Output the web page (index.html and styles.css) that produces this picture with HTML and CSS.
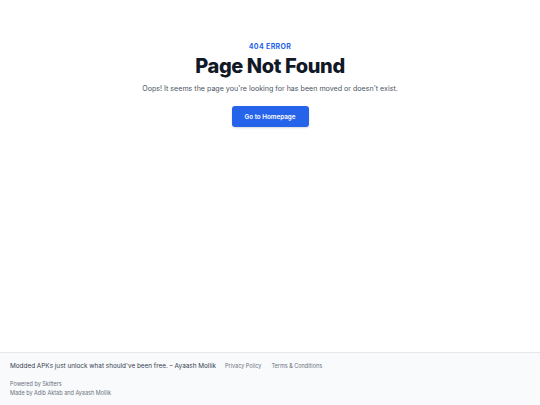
FILE: index.html
```html
<!DOCTYPE html>
<html lang="en">
<head>
<meta charset="utf-8">
<title>404 - Page Not Found</title>
<link rel="stylesheet" href="styles.css">
</head>
<body>
<div class="page">
  <main class="main">
    <p class="eyebrow">404 Error</p>
    <h1 class="title">Page Not Found</h1>
    <p class="desc">Oops! It seems the page you're looking for has been moved or doesn't exist.</p>
    <a class="btn" href="#">Go to Homepage</a>
  </main>
  <footer class="footer">
    <div class="footer-top">
      <span class="quote">Modded APKs just unlock what should've been free. – Ayaash Mollik</span>
      <nav class="links">
        <a href="#">Privacy Policy</a>
        <a href="#">Terms &amp; Conditions</a>
      </nav>
    </div>
    <div class="credits">
      <p>Powered by Skitters</p>
      <p>Made by Adib Aktab and Ayaash Mollik</p>
    </div>
  </footer>
</div>
</body>
</html>
```
FILE: styles.css
```css
* { box-sizing: border-box; }
html, body { margin: 0; padding: 0; }
body {
  font-family: Inter, Roboto, "Liberation Sans", sans-serif;
  background: #ffffff;
  color: #111827;
}
.page {
  min-height: 405px;
  display: flex;
  flex-direction: column;
}
.main {
  display: flex;
  flex-direction: column;
  align-items: center;
  text-align: center;
  padding-top: 42px;
}
.eyebrow {
  margin: 0;
  font-size: 7px;
  font-weight: 700;
  letter-spacing: 0.05em;
  text-transform: uppercase;
  color: #2563eb;
  line-height: 10px;
}
.title {
  margin: 2px 0 0;
  font-size: 20px;
  font-weight: 800;
  letter-spacing: -0.02em;
  line-height: 24px;
  color: #111827;
}
.desc {
  margin: 5px 0 0;
  font-size: 7.1px;
  line-height: 11px;
  color: #4b5563;
}
.btn {
  margin-top: 12px;
  display: inline-flex;
  align-items: center;
  justify-content: center;
  width: 77px;
  height: 21px;
  background: #2563eb;
  color: #fff;
  font-size: 6.3px;
  font-weight: 600;
  text-decoration: none;
  border-radius: 3px;
  box-shadow: 0 1px 2px rgba(0,0,0,0.15);
}
.footer {
  margin-top: auto;
  background: #f9fafb;
  border-top: 1px solid #e5e7eb;
  padding: 8px 10px 9px;
  height: 53px;
}
.footer-top {
  display: flex;
  align-items: center;
  gap: 9px;
  height: 10px;
}
.quote {
  font-size: 6.4px;
  color: #374151;
}
.links {
  display: flex;
  gap: 10px;
}
.links a {
  font-size: 5.5px;
  color: #6b7280;
  text-decoration: none;
}
.credits {
  margin-top: 9px;
}
.credits p {
  margin: 0;
  font-size: 5.5px;
  line-height: 9px;
  color: #6b7280;
}
```
